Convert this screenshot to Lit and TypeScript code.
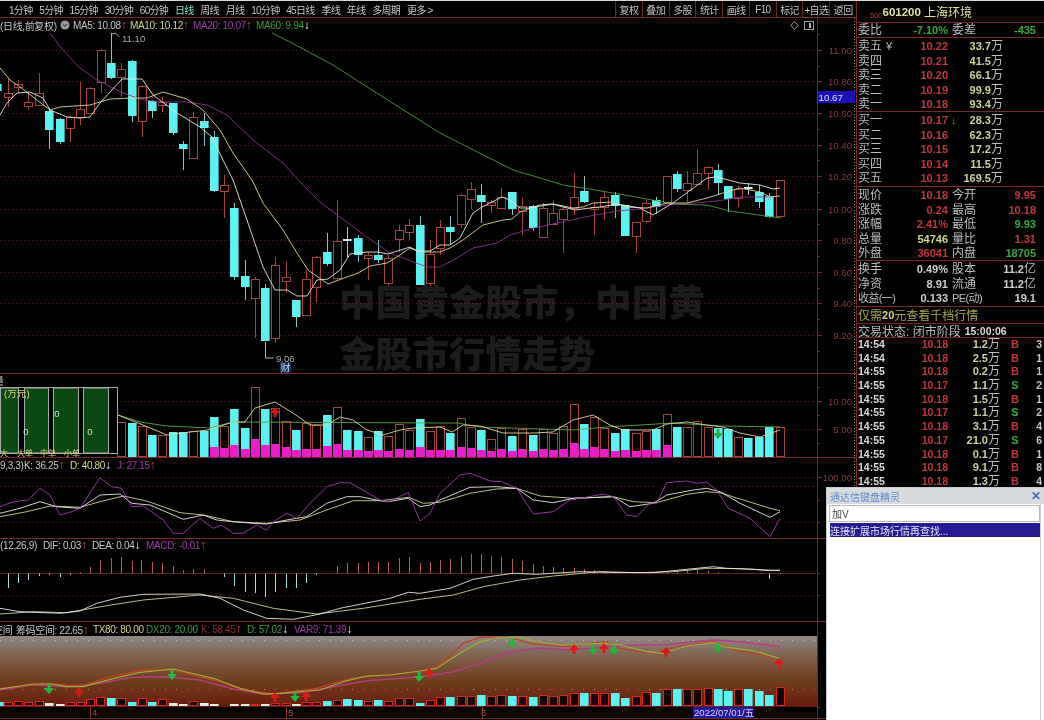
import { LitElement, html, css, svg } from "lit";
import { customElement } from "lit/decorators.js";

type P = [number, number];
const z = (ox: number, oy: number, a: number[][]) => a.map(([x, y]) => `${(ox + x / 3).toFixed(1)},${(oy + y / 3).toFixed(1)}`).join(" ");
const raw = (a: number[][]) => a.map(([x, y]) => `${x},${y}`).join(" ");
const line = (pts: string, color: string, w = 0.9) => svg`<polyline points=${pts} fill="none" stroke=${color} stroke-width=${w} stroke-linejoin="round"/>`;

const RED = "#a8423c";
const CYAN = "#5cf2f2";
const WICK_C = "#86c4c4";

// x, kind, top, bottom, high, low
const candles: [number, string, number, number, number, number][] = [
  [-3,"c",84,91,80,95],[8,"r",93,97,78,107],[18,"r",84,87,80,93],[28,"r",102,106,92,110],[39,"r",93,105,73,106],
  [49,"c",111,130,108,149],[60,"c",119,142,118,144],[70,"r",117,128,116,142],[80,"r",109,117,82,125],[90,"r",88,113,87,114],
  [101,"r",50,82,49,93],[111,"c",63,78,33,79],[121,"r",69,77,63,97],[132,"c",61,116,60,122],[142,"r",86,121,85,137],
  [152,"c",101,111,100,118],[162,"r",102,105,97,112],[173,"c",103,133,103,135],[183,"c",144,149,141,170],[193,"r",117,158,112,159],
  [204,"c",121,128,113,146],[214,"c",137,191,131,192],[224,"r",185,191,175,218],[234,"c",208,277,203,280],[245,"c",276,287,260,300],
  [255,"r",279,298,277,338],[265,"c",288,341,284,341],[275,"r",265,338,257,343],[286,"r",277,281,262,293],[296,"c",300,317,300,327],
  [306,"r",279,315,270,315],[316,"r",257,287,256,302],[327,"c",252,264,233,266],[337,"r",241,278,200,280],[347,"w",239,241,227,257],
  [358,"c",238,255,235,262],[368,"r",255,258,252,280],[378,"c",255,260,240,263],[388,"r",258,283,255,286],[399,"r",230,239,225,252],
  [409,"r",225,232,219,240],[420,"c",225,285,216,285],[430,"r",254,283,240,286],[440,"r",227,248,220,255],[450,"c",227,232,216,245],
  [461,"r",195,224,194,228],[471,"r",189,199,182,209],[481,"c",195,202,184,223],[491,"r",202,205,200,213],[501,"r",197,208,188,208],
  [512,"c",192,209,192,215],[522,"r",206,211,198,235],[533,"c",206,228,205,231],[543,"r",208,237,203,238],[553,"r",213,224,200,224],
  [563,"r",209,219,207,253],[574,"r",197,208,173,215],[584,"c",191,202,176,203],[594,"r",207,209,202,235],[604,"r",197,207,192,220],
  [615,"c",195,206,192,218],[625,"c",205,236,205,236],[636,"r",222,236,222,253],[646,"r",203,221,200,223],[656,"c",200,207,197,214],
  [667,"r",176,202,176,203],[677,"c",174,189,171,192],[687,"r",183,190,171,202],[697,"r",173,184,150,185],[708,"r",167,173,166,190],
  [718,"c",170,183,164,195],[728,"c",186,199,186,212],[738,"r",189,198,186,207],[748,"w",187,189,183,195],[759,"c",192,202,185,208],
  [769,"c",196,217,193,218],[780,"r",180,216,180,218],
];

const ma5 = raw([[0,115],[7,103],[17,93],[30,92],[43,98],[50,110],[67,117],[80,118],[90,117],[100,103],[122,79],[142,79],[153,95],[177,113],[200,127],[212,137],[223,160],[233,180],[247,220],[263,267],[275,290],[287,290],[297,296],[307,296],[317,280],[328,279],[340,270],[350,254],[367,252],[378,252],[388,254],[410,247],[417,251],[430,251],[440,245],[450,245],[460,238],[473,213],[482,207],[502,197],[510,200],[520,208],[530,208],[540,205],[552,204],[575,210],[590,208],[600,207],[617,204],[640,208],[653,215],[673,203],[707,178],[717,177],[740,183],[760,185],[773,189],[780,188]]);
const ma10 = raw([[0,68],[10,80],[20,87],[33,97],[50,110],[60,107],[90,105],[110,99],[133,98],[147,98],[163,92],[187,99],[203,110],[220,130],[233,153],[252,180],[263,203],[283,230],[297,253],[308,270],[328,284],[347,277],[358,273],[370,266],[387,263],[400,255],[410,248],[420,252],[440,252],[450,248],[463,240],[483,225],[503,220],[512,219],[520,212],[530,208],[553,204],[573,208],[583,207],[593,203],[613,202],[627,207],[647,208],[667,203],[687,203],[707,198],[723,193],[740,188],[760,192],[770,197],[780,196]]);
const ma20 = raw([[50,33],[63,50],[80,68],[97,80],[123,93],[143,100],[167,102],[187,102],[207,105],[227,115],[253,140],[283,163],[300,182],[320,202],[340,217],[367,237],[390,253],[427,267],[440,267],[457,258],[473,248],[497,243],[510,235],[530,229],[557,223],[590,216],[617,211],[640,209],[667,205],[693,203],[717,201],[740,197],[773,197]]);
const ma60 = raw([[272,33],[290,42],[333,65],[383,97],[440,133],[513,170],[547,180],[563,185],[583,188],[613,193],[647,199],[673,204],[707,205],[730,211],[773,217],[780,218]]);

// x, kind, top, pink
const vols: [number, string, number, number?][] = [
  [121,"r",422],[132,"c",423],[142,"r",426],[152,"c",435],[162,"r",435],[173,"c",432],[183,"c",432],[193,"r",431],[204,"c",431],
  [214,"c",417,447],[224,"r",426,448],[234,"c",409,445],[245,"c",428,449],[255,"r",387,439],[265,"c",409,445],[275,"r",408,444],[286,"r",421,447],
  [296,"c",430,450],[306,"r",423,449],[316,"r",425,449],[327,"c",415,446],[337,"r",407,444],[347,"c",430,450],[358,"c",431,450],[368,"r",437,451],
  [378,"c",431,450],[388,"r",436,451],[399,"r",424,449],[409,"r",430,450],[420,"c",419,447],[430,"r",431,450],[440,"r",426,450],[450,"c",433,450],
  [461,"r",418,447],[471,"r",427,448],[481,"c",430,450],[491,"r",439,451],[501,"r",428,449],[512,"c",436,451],[522,"r",429,449],[533,"c",435,451],
  [543,"r",429,449],[553,"r",433,450],[563,"r",426,449],[574,"r",404,443],[584,"c",424,449],[594,"r",417,447],[604,"r",428,449],[615,"c",433,451],
  [625,"c",429,450],[636,"r",433,451],[646,"r",431,450],[656,"c",429,450],[667,"r",414,445],[677,"c",427],[687,"r",427],[697,"r",421],[708,"r",427],
  [718,"c",428],[728,"c",429],[738,"r",437],[748,"c",438],[759,"c",437],[769,"c",427],[780,"r",427],
];
const volMaG = raw([[118,415],[140,422],[167,426],[210,428],[233,422],[440,423],[457,423],[480,427],[573,430],[607,427],[673,423],[720,426],[780,427]]);
const volMaY = raw([[118,415],[143,425],[167,435],[190,432],[208,430],[233,422],[245,422],[255,408],[275,402],[293,413],[310,425],[327,425],[340,417],[353,420],[367,430],[383,435],[400,430],[413,428],[440,427],[452,432],[463,425],[480,426],[503,433],[533,433],[553,432],[573,420],[593,415],[610,425],[623,430],[653,430],[667,424],[687,422],[707,425],[723,427],[740,433],[760,437],[780,430]]);

const kdjJ = z(0,370,[[0,410],[40,395],[85,390],[120,355],[150,375],[180,435],[215,425],[240,415],[300,323],[335,350],[365,355],[395,410],[430,408],[490,450],[520,490],[550,490],[600,445],[640,475],[665,465],[700,490],[730,490],[770,465],[800,480],[820,455],[860,430],[890,445],[930,400],[980,350],[1020,338],[1050,338],[1140,390],[1165,395],[1225,368],[1260,453],[1290,430],[1320,370],[1380,315],[1410,310],[1470,333],[1505,335],[1550,355],[1600,432],[1660,425],[1710,390],[1740,385],[1810,372],[1840,380],[1880,435],[1910,440],[1950,400],[1970,400],[2000,338],[2060,333],[2090,340],[2120,337],[2150,360],[2185,415],[2250,445],[2310,500],[2340,445]]);
const kdjK = z(0,370,[[0,430],[60,415],[120,395],[170,410],[240,415],[300,375],[360,372],[395,400],[450,405],[550,448],[610,435],[650,450],[700,455],[760,460],[800,462],[860,450],[920,440],[980,400],[1040,380],[1080,380],[1140,392],[1165,395],[1225,385],[1260,410],[1290,405],[1320,390],[1410,352],[1490,350],[1550,355],[1600,390],[1660,398],[1720,385],[1840,380],[1890,410],[1960,400],[2000,375],[2080,360],[2120,355],[2160,365],[2220,400],[2310,442],[2340,425]]);
const kdjD = z(0,370,[[0,440],[80,425],[150,408],[240,412],[300,395],[370,378],[440,393],[540,428],[610,435],[700,455],[800,460],[900,450],[980,420],[1060,392],[1140,392],[1225,382],[1270,400],[1320,397],[1410,370],[1490,357],[1550,355],[1620,378],[1720,385],[1840,380],[1900,395],[1970,398],[2060,373],[2120,365],[2160,368],[2310,415],[2340,422]]);

const macdBars: P[] = [[8,588],[18,583],[28,580],[39,576],[49,575],[60,577],[70,575],[80,572],[90,567],[100,560],[111,558],[121,557],[132,561],[141,560],[152,562],[162,563],[173,566],[183,570],[193,569],[204,569],[224,577],[234,586],[245,592],[255,593],[265,597],[275,592],[286,588],[296,588],[306,583],[316,575],[337,566],[347,563],[358,563],[368,562],[378,562],[388,562],[399,558],[409,557],[420,563],[430,562],[440,560],[450,559],[461,557],[471,554],[481,554],[491,556],[501,557],[512,559],[522,561],[533,564],[543,566],[553,567],[563,568],[574,568],[584,569],[594,570],[604,571],[667,572],[677,571],[687,570],[697,570],[708,571],[718,572],[769,579],[780,574]];
const dif = z(0,540,[[0,205],[60,215],[180,220],[240,213],[290,190],[360,172],[430,163],[600,162],[660,175],[730,210],[800,235],[880,238],[960,222],[1020,205],[1170,175],[1225,157],[1260,160],[1350,145],[1420,118],[1480,108],[1540,100],[1610,103],[1740,95],[1830,97],[1960,98],[2060,88],[2140,80],[2180,85],[2260,88],[2305,92],[2340,90]]);
const dea = z(0,540,[[0,222],[100,215],[200,218],[320,197],[430,180],[600,165],[700,175],[820,205],[950,222],[1090,205],[1260,178],[1360,165],[1450,140],[1560,120],[1660,108],[1800,95],[1910,98],[2020,95],[2120,85],[2220,86],[2305,90],[2340,92]]);

const lineGreen = z(0,540,[[0,447],[100,432],[150,432],[200,440],[250,440],[330,418],[420,397],[520,387],[640,415],[720,445],[790,462],[840,460],[900,455],[960,450],[1030,425],[1100,408],[1170,405],[1260,393],[1310,385],[1380,340],[1440,305],[1500,292],[1560,292],[1610,305],[1690,315],[1810,310],[1860,315],[1940,335],[1990,340],[2060,318],[2140,308],[2180,322],[2260,332],[2338,355]]);
const linePink = z(0,540,[[0,450],[100,435],[200,440],[300,430],[400,412],[500,410],[600,420],[700,447],[790,462],[900,458],[1000,440],[1100,422],[1260,410],[1360,395],[1440,370],[1520,340],[1610,325],[1710,330],[1820,320],[1910,315],[1990,315],[2140,300],[2220,305],[2340,320]]);
const lineRed = z(0,540,[[0,445],[150,430],[240,440],[330,410],[430,390],[520,392],[640,420],[730,450],[820,462],[950,445],[1050,415],[1260,395],[1320,375],[1390,310],[1440,292],[1520,290],[1590,310],[1690,320],[1820,305],[1860,325],[1960,340],[2030,320],[2140,305],[2210,332],[2290,345],[2338,372]]);

// x, kind, top
const lowBars: [number, string, number][] = [
  [-1,"c",702],[8,"r",702],[18,"r",701],[28,"r",702],[39,"r",701],[49,"w",703],[60,"w",704],[70,"r",702],[80,"r",702],[90,"r",699],[100,"r",697],[111,"c",698],[121,"r",698],
  [132,"c",702],[142,"r",698],[152,"c",702],[162,"r",699],[173,"w",703],[183,"w",704],[193,"r",701],[204,"w",703],[214,"w",704],[224,"r",705],[234,"w",704],[245,"w",704],[255,"r",704],[265,"w",704],
  [275,"r",703],[286,"r",703],[296,"w",704],[306,"r",702],[316,"r",702],[327,"c",701],[337,"r",700],[347,"c",699],[358,"c",700],[368,"r",701],[378,"c",700],[388,"r",701],[399,"r",698],[409,"r",698],
  [420,"c",703],[430,"r",700],[440,"r",697],[450,"c",697],[461,"r",696],[471,"r",696],[481,"c",695],[491,"r",696],[501,"r",695],[512,"c",696],[522,"r",696],[533,"c",697],[543,"r",695],[553,"r",696],[563,"r",695],
  [574,"r",693],[584,"c",693],[594,"r",693],[604,"r",693],[615,"c",693],[625,"c",698],[636,"r",696],[646,"r",692],[656,"c",693],[667,"r",689],[677,"c",689],[687,"r",689],[697,"r",689],[708,"r",688],[718,"c",689],
  [728,"c",691],[738,"r",689],[748,"c",689],[759,"c",691],[769,"c",695],[780,"r",687],
];
const lowArrows: [number, number, string][] = [[49,689,"g"],[172,675,"g"],[295,697,"g"],[419,677,"g"],[512,643,"g"],[593,650,"g"],[614,650,"g"],[718,648,"g"],[79,692,"r"],[275,697,"r"],[306,696,"r"],[429,673,"r"],[574,649,"r"],[604,648,"r"],[666,652,"r"],[779,663,"r"]];

const arrow = (x: number, y: number, up: boolean, color: string) =>
  up
    ? svg`<path d="M${x - 1.5} ${y + 5}h3v-4h3.5l-5 -6l-5 6h3.5z" fill=${color}/>`
    : svg`<path d="M${x - 1.5} ${y - 5}h3v4h3.5l-5 6l-5 -6h3.5z" fill=${color}/>`;

const priceAxis: [string, number][] = [["11.00",50],["10.80",81],["10.60",113],["10.40",145],["10.20",176],["10.00",209],["9.80",240],["9.60",272],["9.40",303],["9.20",335]];

const sells = [["卖五","10.22","33.7"],["卖四","10.21","41.5"],["卖三","10.20","66.1"],["卖二","10.19","99.9"],["卖一","10.18","93.4"]];
const buys = [["买一","10.17","28.3"],["买二","10.16","62.3"],["买三","10.15","17.2"],["买四","10.14","11.5"],["买五","10.13","169.5"]];
const stats = [
  ["现价","10.18","red","今开","9.95","red"],["涨跌","0.24","red","最高","10.18","red"],["涨幅","2.41%","red","最低","9.93","grn"],
  ["总量","54746","yel","量比","1.31","red"],["外盘","36041","red","内盘","18705","grn"],
];
const finance = [["换手","0.49%","股本","11.2","亿"],["净资","8.91","流通","11.2","亿"],["收益(一)","0.133","PE(动)","19.1",""]];
const ticks = [["14:54","10.18","1.2","B","3"],["14:54","10.18","2.5","B","1"],["14:55","10.18","0.2","B","1"],["14:55","10.17","1.1","S","2"],["14:55","10.18","1.5","B","1"],["14:55","10.17","1.1","S","2"],["14:55","10.18","3.1","B","4"],["14:55","10.17","21.0","S","6"],["14:55","10.18","0.1","B","1"],["14:55","10.18","9.1","B","8"],["14:55","10.18","1.3","B","4"]];

@customElement("app-root")
export class AppRoot extends LitElement {
  static styles = css`
    :host { display: block; width: 1044px; height: 720px; overflow: hidden; background: #000; font-family: "Liberation Sans", "Noto Sans CJK SC", sans-serif; }
    * { box-sizing: border-box; }
    svg { display: block; }
    svg text { font-family: "Liberation Sans", "Noto Sans CJK SC", sans-serif; }
    .root { position: relative; width: 1044px; height: 720px; display: flex; background: #000; border-top: 1px solid #d8d8d8; filter: blur(0.35px); overflow: hidden; }
    .main { width: 856px; flex: none; display: flex; flex-direction: column; }
    .toolbar { height: 17px; flex: none; display: flex; align-items: center; border-bottom: 1px solid #7c2626; font-size: 10px; letter-spacing: -0.7px; color: #c4c4c4; white-space: nowrap; padding-left: 9px; }
    .toolbar .tabs { display: flex; gap: 6.8px; width: 606px; }
    .toolbar .on { color: #86e0c0; }
    .toolbar .btns { display: flex; height: 100%; flex: 1; }
    .toolbar .btns span { flex: 1; display: flex; align-items: center; justify-content: center; border-left: 1px solid #6a2424; }
    .panel { display: flex; flex: none; border-bottom: 1px solid #7c2626; }
    .plot { width: 818px; flex: none; border-right: 1px solid #7c2626; display: flex; flex-direction: column; overflow: hidden; }
    .legend { flex: none; display: flex; align-items: center; font-size: 10px; letter-spacing: -0.35px; white-space: nowrap; color: #c8c8c8; }
    .legend.h14 { height: 14px; }
    .legend.h13 { height: 13px; }
    .legend i { font-style: normal; flex: none; }
    .legend i i { font-size: 12px; line-height: 10px; letter-spacing: 0; }
    .up { color: #d04a40; }
    .dn { color: #e4f4f4; }
    .y { color: #d6d68c; }
    .p { color: #9c3ca8; }
    .g { color: #3f9a3c; }
    .dr { color: #8a2c30; }
    .cut { margin-left: -6px; }
    .tools { margin-left: auto; display: flex; align-items: center; gap: 5px; padding-right: 3px; }
    .side { width: 188px; flex: none; border-left: 1px solid #7c2626; display: flex; flex-direction: column; color: #bdbdbd; overflow: hidden; }
    .sec { flex: none; border-bottom: 1px solid #7c2626; padding-left: 1px; }
    .title { height: 22px; display: flex; align-items: center; padding-left: 13px; color: #e2e2a0; font-size: 11.5px; font-weight: bold; }
    .title small { font-size: 7.5px; font-weight: normal; color: #a83c3c; align-self: flex-end; margin-bottom: 2px; }
    .title span { font-weight: normal; margin-left: 3px; font-size: 12px; }
    .cjk { font-size: 12px; white-space: nowrap; }
    .cjk.tight { font-size: 11px; letter-spacing: -0.6px; }
    .num { font-size: 11px; font-weight: bold; text-align: right; }
    .red { color: #c2363c; }
    .grn { color: #36a83c; }
    .yel { color: #d0d68c; }
    .wht { color: #cfcfcf; }
    .pad { padding-top: 1px; }
    .row2 { display: grid; grid-template-columns: 34px 56px 34px 54px; column-gap: 0; align-items: center; height: 14.5px; line-height: 14.5px; }
    .row2 > :nth-child(3) { padding-left: 4px; }
    .book { display: grid; grid-template-columns: 60px 30px 12px 43px; align-items: center; height: 14.5px; line-height: 14.5px; }
    .book .amt, .tick .amt { text-align: right; font-size: 11px; font-weight: bold; color: #c8d498; white-space: nowrap; }
    .book .amt em, .tick .amt em, .row2 em { font-style: normal; font-weight: normal; color: #bdbdbd; font-size: 12px; }
    .tiny { font-size: 11px; margin-left: 4px; }
    .arrow-g { color: #36a83c; font-size: 11px; font-weight: bold; padding-left: 3px; }
    .promo { height: 17px; display: flex; align-items: center; font-size: 12px; color: #a8a850; padding-bottom: 1px; }
    .promo b { font-size: 11px; color: #d6d68c; }
    .state { height: 14px; display: flex; align-items: center; font-size: 12px; }
    .state b { font-size: 10.5px; color: #d8d8d8; margin-left: 4px; }
    .tick { display: grid; grid-template-columns: 62px 28px 52px 22px 20px; align-items: center; height: 13.7px; line-height: 13.7px; padding-left: 1px; }
    .tick .t { font-size: 10.5px; font-weight: bold; color: #d8d8d8; }
    .tick .bs { font-size: 11px; font-weight: bold; text-align: center; padding-left: 8px; }
    .tick .n { font-size: 10.5px; font-weight: bold; text-align: right; color: #c4c4c4; }
    .mark { position: absolute; left: 339px; top: 274px; width: 372px; font-size: 36.6px; line-height: 52px; font-weight: 900; color: rgba(255,255,255,0.11); font-family: "Noto Sans CJK SC", sans-serif; pointer-events: none; }
    .popup { position: absolute; left: 826px; top: 486px; width: 218px; height: 234px; background: #fff; border-left: 1px solid #c4ccd4; border-top: 1px solid #c4ccd4; display: flex; flex-direction: column; }
    .popup::after { content: ""; position: absolute; left: 213px; top: 16px; bottom: 0; width: 1px; background: #cdd6de; }
    .pop-title { height: 16px; flex: none; background: #d9dcde; color: #5c8ccc; font-size: 10px; display: flex; align-items: center; justify-content: space-between; padding: 0 3px 0 3px; }
    .pop-title b { color: #3f72b8; font-size: 12px; }
    .pop-input { height: 17px; flex: none; margin: 1px 0 0 2px; width: 211px; border: 1px solid #b8b8b8; font-size: 10px; color: #444; display: flex; align-items: center; padding-left: 2px; }
    .pop-sel { height: 14px; flex: none; margin: 1px 0 0 3px; width: 210px; background: #241c92; color: #e4e4f4; font-size: 10px; display: flex; align-items: center; white-space: nowrap; }
  `;

  candles() {
    return candles.map(([x, k, t, b, h, l]) => {
      if (k === "r") {
        return svg`<line x1=${x + 0.5} x2=${x + 0.5} y1=${h} y2=${t} stroke=${RED}/><line x1=${x + 0.5} x2=${x + 0.5} y1=${b} y2=${l} stroke=${RED}/><rect x=${x - 3.5} y=${t + 0.5} width="8" height=${b - t} fill="#000" stroke=${RED}/>`;
      }
      const c = k === "w" ? "#d8e8e8" : CYAN;
      return svg`<line x1=${x + 0.5} x2=${x + 0.5} y1=${h} y2=${l} stroke=${k === "w" ? "#b0c8c8" : WICK_C}/><rect x=${x - 4} y=${t} width="8.6" height=${Math.max(b - t, 1.5)} fill=${c}/>`;
    });
  }

  grid(ys: number[], to = 816) {
    return ys.map((y) => svg`<line x1="0" x2=${to} y1=${y + 0.5} y2=${y + 0.5} stroke="#4a1c1c" stroke-dasharray="1 3"/>`);
  }

  axis(top: number, h: number, labels: [string, number][], minor: number[] = [], extra: unknown = "") {
    return svg`<svg width="37" height=${h} viewBox="818 ${top} 37 ${h}">
      ${labels.map(([t, y]) => svg`
        <line x1="818" x2="822" y1=${y + 0.5} y2=${y + 0.5} stroke="#7c2626"/>
        <text x="852" y=${y + 3.5} text-anchor="end" font-size="9.6" fill="#8c3c3c">${t}</text>`)}
      ${minor.map((y) => svg`<line x1="818" x2="820" y1=${y + 0.5} y2=${y + 0.5} stroke="#7c2626"/>`)}
      <line x1="854.5" x2="854.5" y1=${top} y2=${top + h} stroke="#8a8a8a" stroke-dasharray="1 2"/>
      ${extra}
    </svg>`;
  }

  pricePanel() {
    const top = 18;
    const hi = svg`<rect x="818" y="91" width="37" height="12" fill="#1c12b4"/><text x="818.5" y="100.5" font-size="9.8" fill="#d4e0ff">10.67</text>`;
    return html`<div class="panel" style="height:356px">
      <div class="plot">
        <div class="legend h14">
          <i style="width:60px">(日线,前复权)</i>
          <svg width="13" height="10" viewBox="0 0 13 10"><circle cx="5" cy="5" r="4.5" fill="#9a9a9a"/><path d="M2.8 4l2.2 2.2L7.2 4" fill="none" stroke="#222"/></svg>
          <i style="width:57px">MA5: 10.08<i class="up">↑</i></i>
          <i class="y" style="width:63px">MA10: 10.12<i class="up">↑</i></i>
          <i class="p" style="width:63px">MA20: 10.07<i class="up">↑</i></i>
          <i class="g">MA60: 9.94<i class="dn">↓</i></i>
          <span class="tools">
            <svg width="9" height="9" viewBox="0 0 9 9"><path d="M4.5 .7L8.3 4.5L4.5 8.3L.7 4.5Z" fill="none" stroke="#a0a0a0"/></svg>
            <svg width="10" height="9" viewBox="0 0 10 9"><rect x=".5" y=".5" width="9" height="8" fill="none" stroke="#a0a0a0"/><rect x="5" y="2" width="2" height="5" fill="#bbb"/></svg>
          </span>
        </div>
        <svg width="817" height="341" viewBox="0 32 817 341">
          ${this.grid(priceAxis.map((a) => a[1]))}
          ${this.candles()}
          ${line(ma60, "#4e9a3c")}
          ${line(ma20, "#8c3090")}
          ${line(ma10, "#dcd898")}
          ${line(ma5, "#e8e8e8")}
          <path d="M111.5 34l4-1l4 4" fill="none" stroke="#b0b0b0"/>
          <text x="122" y="41.5" font-size="9.6" fill="#a8a8a8">11.10</text>
          <path d="M265.5 342v16h8" fill="none" stroke="#b0b0b0"/>
          <text x="276" y="361.5" font-size="9.6" fill="#a8a8a8">9.06</text>
          <rect x="280" y="362" width="11" height="11" fill="#14305c"/>
          <text x="285.5" y="371" font-size="9.6" text-anchor="middle" fill="#c8dcf8">财</text>
        </svg>
      </div>
      ${this.axis(top, 355, priceAxis, [34, 66, 129, 160, 192, 224, 256, 288, 319, 351], hi)}
    </div>`;
  }

  volPanel() {
    const cols: P[] = [[0, 18], [24, 24], [53, 25], [83, 25]];
    return html`<div class="panel" style="height:84px">
      <div class="plot">
        <div class="legend h13"><i class="cut">量</i></div>
        <svg width="817" height="70" viewBox="0 387 817 70">
          ${this.grid([401, 429])}
          ${vols.map(([x, k, t, p]) => {
            const bar = k === "c"
              ? svg`<rect x=${x - 4} y=${t} width="8.6" height=${457 - t} fill=${CYAN}/>`
              : svg`<rect x=${x - 3.5} y=${t + 0.5} width="8" height=${457 - t - 1} fill="#000" stroke=${RED}/>`;
            const pk = p ? svg`<rect x=${x - 4} y=${p} width="8.6" height=${457 - p} fill="#ec1ccc"/>` : "";
            return svg`${bar}${pk}`;
          })}
          ${line(volMaG, "#58a844")}
          ${line(volMaY, "#dcd89c")}
          ${arrow(275, 412, true, "#d01818")}
          ${arrow(718, 434, false, "#22b040")}
          <rect x="0.5" y="387.5" width="117" height="66" fill="#000" stroke="#a8a8a8"/>
          ${cols.map(([x, w]) => svg`<rect x=${x + 0.5} y="388" width=${w} height="65" fill="#0a4a12" stroke="#a8a8a8"/>`)}
          <text x="4" y="397" font-size="9.6" fill="#d6d67c">(万元)</text>
          <text x="26" y="435" font-size="9.6" fill="#dcdcdc" text-anchor="middle">0</text>
          <text x="57" y="417" font-size="9.6" fill="#dcdcdc" text-anchor="middle">0</text>
          <text x="90" y="435" font-size="9.6" fill="#dcdcdc" text-anchor="middle">0</text>
          <text x="0" y="455.5" font-size="8" fill="#d6d67c">大</text>
          <text x="17" y="455.5" font-size="8" fill="#d6d67c">大单</text>
          <text x="40" y="455.5" font-size="8" fill="#d6d67c">中单</text>
          <text x="64" y="455.5" font-size="8" fill="#d6d67c">小单</text>
        </svg>
      </div>
      ${this.axis(374, 83, [["10.00", 401], ["5.00", 429]], [387, 415, 443])}
    </div>`;
  }

  kdjPanel() {
    return html`<div class="panel" style="height:81px">
      <div class="plot">
        <div class="legend h13" style="padding-top:2px">
          <i style="width:24px">9,3,3)</i>
          <i style="width:46px">K: 36.25<i class="up">↑</i></i>
          <i class="y" style="width:47px">D: 40.80<i class="dn">↓</i></i>
          <i class="p">J: 27.15<i class="up">↑</i></i>
        </div>
        <svg width="817" height="67" viewBox="0 471 817 67">
          ${this.grid([477, 486, 522])}
          ${line(kdjD, "#d4d08c")}
          ${line(kdjK, "#e8e8e8")}
          ${line(kdjJ, "#a03cb0")}
        </svg>
      </div>
      ${this.axis(458, 80, [["100.00", 477]], [500, 522])}
    </div>`;
  }

  macdPanel() {
    return html`<div class="panel" style="height:83px">
      <div class="plot">
        <div class="legend h13">
          <i style="width:43px">(12,26,9)</i>
          <i style="width:49px">DIF: 0.03<i class="up">↑</i></i>
          <i style="width:54px">DEA: 0.04<i class="dn">↓</i></i>
          <i class="p">MACD: -0.01<i class="up">↑</i></i>
        </div>
        <svg width="817" height="69" viewBox="0 552 817 69">
          <line x1="0" x2="816" y1="573.5" y2="573.5" stroke="#5c2020"/>
          ${this.grid([595])}
          ${macdBars.map(([x, y]) => svg`<line x1=${x + 0.5} x2=${x + 0.5} y1="573.5" y2=${y} stroke=${y > 573 ? "#a4dcdc" : "#b85858"}/>`)}
          ${line(dea, "#d4d08c")}
          ${line(dif, "#e8e8e0")}
        </svg>
      </div>
      ${this.axis(539, 82, [], [573, 595])}
    </div>`;
  }

  lowPanel() {
    return html`<div class="panel" style="height:97px">
      <div class="plot">
        <div class="legend h14">
          <i style="width:23px;margin-left:-7px">空间</i>
          <i style="width:77px">筹码空间: 22.65<i class="up">↑</i></i>
          <i class="y" style="width:53px">TX80: 80.00</i>
          <i class="g" style="width:55px">DX20: 20.00</i>
          <i class="dr" style="width:46px">K: 58.45<i class="up">↑</i></i>
          <i class="g" style="width:47px">D: 57.02<i class="dn">↓</i></i>
          <i class="p">VAR9: 71.39<i class="dn">↓</i></i>
        </div>
        <svg width="817" height="82" viewBox="0 636 817 82">
          <defs>
            <linearGradient id="bg" x1="0" y1="0" x2="0" y2="1">
              <stop offset="0" stop-color="#8e8a88"/>
              <stop offset="0.35" stop-color="#7c5a44"/>
              <stop offset="0.65" stop-color="#6e3c1c"/>
              <stop offset="1" stop-color="#681c0c"/>
            </linearGradient>
          </defs>
          <rect x="0" y="636" width="817" height="71" fill="url(#bg)"/>
          <line x1="0" x2="816" y1="640.5" y2="640.5" stroke="#c8c0b8" stroke-dasharray="1 10"/>
          <line x1="0" x2="816" y1="689.5" y2="689.5" stroke="#b88868" stroke-dasharray="1 10"/>
          ${line(linePink, "#b43c80", 1.6)}
          ${line(lineRed, "#c04028", 1.3)}
          ${line(lineGreen, "#9cb030", 1.2)}
          ${lowBars.map(([x, k, t]) => {
            if (k === "c") return svg`<rect x=${x - 4} y=${t} width="8.6" height=${706 - t} fill=${CYAN}/>`;
            if (k === "w") return svg`<rect x=${x - 4} y=${t} width="8.6" height=${Math.max(706 - t, 1)} fill="#e4ece4"/>`;
            return svg`<rect x=${x - 3.5} y=${t + 0.5} width="8" height=${706 - t - 1} fill="#180404" stroke="#d42820"/>`;
          })}
          ${lowArrows.map(([x, y, c]) => (c === "g" ? arrow(x, y, false, "#22b83c") : arrow(x, y, true, "#e01818")))}
          <line x1="90.5" x2="90.5" y1="707" y2="718" stroke="#8c2c2c"/>
          <text x="92" y="716" font-size="9.6" fill="#a84c4c">4</text>
          <line x1="286.5" x2="286.5" y1="707" y2="718" stroke="#8c2c2c"/>
          <text x="288" y="716" font-size="9.6" fill="#a84c4c">5</text>
          <line x1="482.5" x2="482.5" y1="707" y2="718" stroke="#8c2c2c"/>
          <text x="481" y="716" font-size="9.6" fill="#a84c4c">6</text>
          <rect x="693" y="707" width="60" height="11" fill="#22189c"/>
          <text x="694" y="716" font-size="9.6" fill="#d4d4f4">2022/07/01/五</text>
        </svg>
      </div>
      ${this.axis(622, 96, [], [707])}
    </div>`;
  }

  side() {
    const bookRow = (r: string[], arrowDown = false, yen = false) => html`<div class="book">
      <span class="cjk">${r[0]}${yen ? html`<span class="tiny">¥</span>` : ""}</span>
      <span class="num red">${r[1]}</span>
      <span class="arrow-g">${arrowDown ? "↓" : ""}</span>
      <span class="amt">${r[2]}<em>万</em></span>
    </div>`;
    return html`<div class="side">
      <div class="sec title"><small>500</small>601200<span>上海环境</span></div>
      <div class="sec" style="height:15px"><div class="row2" style="height:14px;line-height:14px">
        <span class="cjk">委比</span><span class="num grn">-7.10%</span><span class="cjk">委差</span><span class="num grn">-435</span>
      </div></div>
      <div class="sec pad" style="height:74px">${sells.map((r, i) => bookRow(r, false, i === 0))}</div>
      <div class="sec pad" style="height:75px">${buys.map((r, i) => bookRow(r, i === 0))}</div>
      <div class="sec pad" style="height:74px">${stats.map((r) => html`<div class="row2">
        <span class="cjk">${r[0]}</span><span class="num ${r[2]}">${r[1]}</span><span class="cjk">${r[3]}</span><span class="num ${r[5]}">${r[4]}</span>
      </div>`)}</div>
      <div class="sec pad" style="height:46px">${finance.map((r, i) => html`<div class="row2">
        <span class="cjk ${i === 2 ? "tight" : ""}">${r[0]}</span><span class="num wht">${r[1]}</span><span class="cjk ${i === 2 ? "tight" : ""}">${r[2]}</span><span class="num wht">${r[3]}<em>${r[4]}</em></span>
      </div>`)}</div>
      <div class="sec promo">仅需<b>20</b>元查看千档行情</div>
      <div class="sec state">交易状态: 闭市阶段<b>15:00:06</b></div>
      <div class="ticks">${ticks.map((r) => html`<div class="tick">
        <span class="t">${r[0]}</span><span class="num red" style="font-size:10.5px">${r[1]}</span>
        <span class="amt">${r[2]}<em>万</em></span>
        <span class="bs ${r[3] === "B" ? "red" : "grn"}">${r[3]}</span>
        <span class="n">${r[4]}</span>
      </div>`)}</div>
    </div>`;
  }

  render() {
    const tabs = ["1分钟","5分钟","15分钟","30分钟","60分钟","日线","周线","月线","10分钟","45日线","季线","年线","多周期","更多 >"];
    const btns = ["复权","叠加","多股","统计","画线","F10","标记","+自选","返回"];
    return html`<div class="root">
      <div class="main">
        <div class="toolbar">
          <div class="tabs">${tabs.map((t) => html`<span class=${t === "日线" ? "on" : ""}>${t}</span>`)}</div>
          <div class="btns">${btns.map((t) => html`<span>${t}</span>`)}</div>
        </div>
        ${this.pricePanel()}
        ${this.volPanel()}
        ${this.kdjPanel()}
        ${this.macdPanel()}
        ${this.lowPanel()}
      </div>
      ${this.side()}
      <div class="mark">中国黄金股市，中国黄金股市行情走势</div>
      <div class="popup">
        <div class="pop-title"><span>通达信键盘精灵</span><b>✕</b></div>
        <div class="pop-input">加V</div>
        <div class="pop-sel">连接扩展市场行情再查找...</div>
      </div>
    </div>`;
  }
}
